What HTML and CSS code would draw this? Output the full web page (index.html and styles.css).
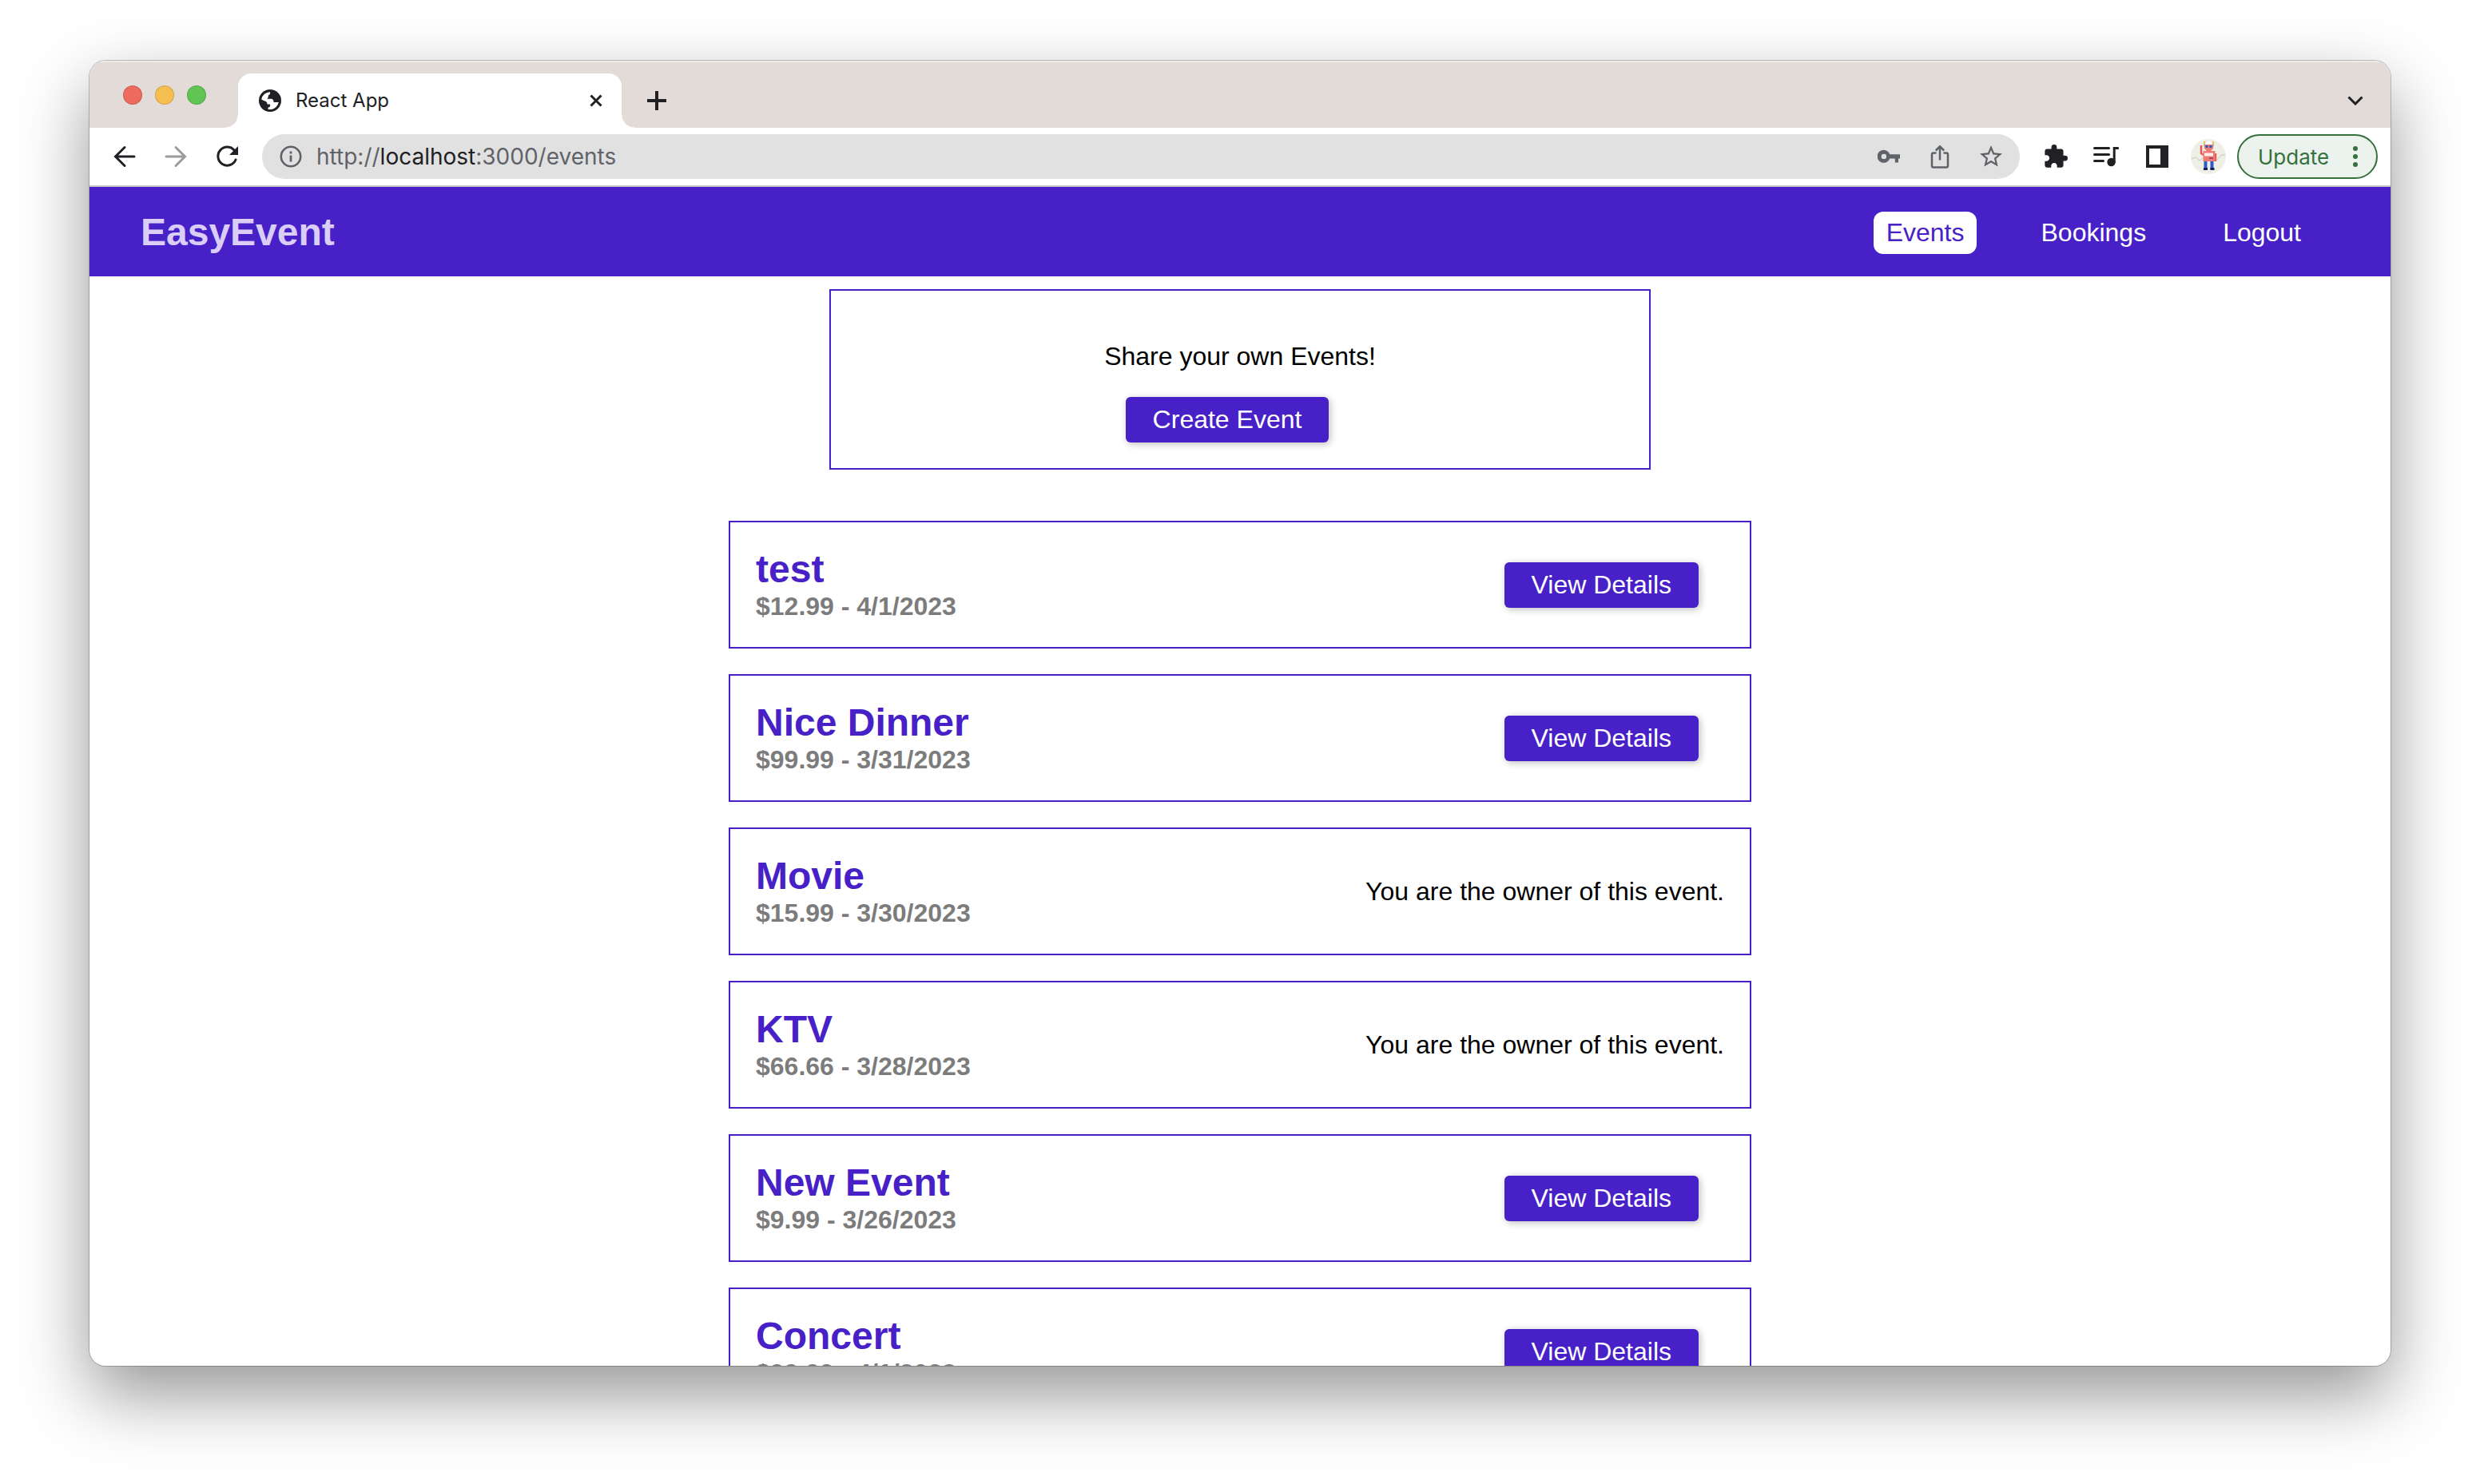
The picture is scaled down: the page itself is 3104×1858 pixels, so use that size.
FILE: index.html
```html
<!DOCTYPE html>
<html lang="en">
<head>
<meta charset="utf-8">
<title>React App</title>
<link rel="stylesheet" href="styles.css">
</head>
<body>
<div class="window">
  <div class="tabstrip">
    <div class="lights">
      <button class="light light-close" aria-label="Close window"></button>
      <button class="light light-min" aria-label="Minimize window"></button>
      <button class="light light-max" aria-label="Zoom window"></button>
    </div>
    <div class="tab">
      <svg class="favicon" viewBox="0 0 28 28" aria-hidden="true"><circle cx="14" cy="14" r="14" fill="#202124"/><path fill="#fff" d="M3.200 12.500A11 11 0 0 1 14 3.200c.6 2.800-1 3.300-2.200 4.300.2 2-.3 3-1.600 4.300h5.300c2 0 3 1.700 3 4.200h6.200A11 11 0 0 1 11.500 24.700v-2.200c2.500 0 3.500-2.500 2-4h-3c0-3-1.500-4-4-4.300z"/></svg>
      <span class="tab-title">React App</span>
      <button class="icon-btn" aria-label="Close tab"><svg width="16" height="16" viewBox="0 0 16 16"><path d="M1.500 1.500l13 13M14.500 1.500l-13 13" stroke="#202124" stroke-width="3" fill="none"/></svg></button>
    </div>
    <button class="icon-btn new-tab" aria-label="New tab"><svg width="24" height="24" viewBox="0 0 24 24"><path d="M12 0v24M0 12h24" stroke="#202124" stroke-width="4"/></svg></button>
    <button class="icon-btn tab-search" aria-label="Search tabs"><svg width="20" height="12" viewBox="0 0 20 12"><path d="M1.500 1.500L10 10l8.500-8.500" stroke="#202124" stroke-width="3" fill="none"/></svg></button>
  </div>

  <div class="toolbar">
    <button class="icon-btn nav-btn" aria-label="Back"><svg width="28" height="28" viewBox="0 0 28 28"><path d="M26 14H3M14 2.500L2.500 14 14 25.500" stroke="#202124" stroke-width="3" stroke-linecap="round" fill="none"/></svg></button>
    <button class="icon-btn nav-btn" aria-label="Forward"><svg width="28" height="28" viewBox="0 0 28 28"><path d="M2 14h23M14 2.500L25.500 14 14 25.500" stroke="#9c9c9c" stroke-width="3" stroke-linecap="round" fill="none"/></svg></button>
    <button class="icon-btn nav-btn" aria-label="Reload"><svg width="28" height="28" viewBox="0 0 28 28"><path d="M25 18A11.500 11.500 0 1 1 23 6" stroke="#202124" stroke-width="3" stroke-linecap="round" fill="none"/><path d="M28 1v11H17z" fill="#202124"/></svg></button>
    <div class="omnibox">
      <svg width="28" height="28" viewBox="0 0 28 28" aria-hidden="true"><circle cx="14" cy="14" r="12.200" stroke="#5f6368" stroke-width="2.600" fill="none"/><path d="M14 12.500v8M14 7.500v3" stroke="#5f6368" stroke-width="2.800"/></svg>
      <div class="url" role="textbox" aria-label="Address and search bar">http://<span class="host">localhost</span>:3000/events</div>
      <button class="icon-btn" aria-label="Passwords"><svg width="28" height="28" viewBox="0 0 28 28"><path fill="#5f6368" fill-rule="evenodd" d="M15.200 11.200H28v5.200h-2v5h-4.200v-5h-6.600a8 8 0 1 1 0-5.200zM7.900 10.700a3.200 3.200 0 1 0 0 6.400 3.200 3.200 0 0 0 0-6.400z"/></svg></button>
      <button class="icon-btn" aria-label="Share"><svg width="28" height="30" viewBox="0 0 28 30"><path d="M9.500 10.500H6a2 2 0 0 0-2 2v14a2 2 0 0 0 2 2h16a2 2 0 0 0 2-2v-14a2 2 0 0 0-2-2h-3.500M14 19.500V3M8.800 7.500L14 2.300l5.200 5.200" stroke="#5f6368" stroke-width="2.500" fill="none"/></svg></button>
      <button class="icon-btn" aria-label="Bookmark"><svg width="28" height="28" viewBox="2 2 20 20"><path fill="#5f6368" d="M22 9.240l-7.190-.62L12 2 9.190 8.630 2 9.240l5.460 4.730L5.820 21 12 17.270 18.180 21l-1.630-7.030L22 9.240zM12 15.400l-3.760 2.270 1-4.280-3.320-2.880 4.380-.38L12 6.100l1.710 4.040 4.380.38-3.320 2.880 1 4.280L12 15.400z"/></svg></button>
    </div>
    <div class="actions">
      <button class="icon-btn" aria-label="Extensions"><svg width="30" height="30" viewBox="1 1 22 22"><path fill="#202124" d="M20.500 11H19V7c0-1.100-.9-2-2-2h-4V3.500a2.500 2.500 0 0 0-5 0V5H4c-1.100 0-1.990.9-1.990 2v3.800H3.500c1.490 0 2.700 1.210 2.700 2.700s-1.210 2.700-2.700 2.700H2V20c0 1.100.9 2 2 2h3.800v-1.500c0-1.490 1.210-2.700 2.700-2.700s2.700 1.210 2.700 2.700V22H17c1.100 0 2-.9 2-2v-4h1.500a2.500 2.500 0 0 0 0-5z"/></svg></button>
      <button class="icon-btn" aria-label="Media controls"><svg width="34" height="26" viewBox="0 0 34 26"><path d="M1.500 2.500h18M1.500 10.500h18M1.500 18.500h11" stroke="#202124" stroke-width="3" stroke-linecap="round"/><circle cx="22.500" cy="20" r="5.200" fill="#202124"/><path d="M26.200 20V2.500h4.500" stroke="#202124" stroke-width="3" fill="none" stroke-linecap="round"/></svg></button>
      <button class="icon-btn" aria-label="Side panel"><svg width="28" height="28" viewBox="0 0 28 28"><path fill="#202124" fill-rule="evenodd" d="M0 0h28v28H0zM4 4v20h14V4z"/></svg></button>
      <button class="icon-btn profile" aria-label="Profile"><svg width="44" height="44" viewBox="0 0 44 44">
        <circle cx="22" cy="22" r="22" fill="#f0efe6"/>
        <path d="M1 25l5-2 5 4 4-3M33 26l5-6 5 0" stroke="#c4c6c4" fill="none"/>
        <path d="M17 3.500v6M28 3.500v6" stroke="#8ccfcb" stroke-width="2"/><path d="M17 3v3M28 3v3" stroke="#f0c24b" stroke-width="2"/>
        <path d="M18 7q4.500-9 9 0z" fill="#fff"/>
        <path d="M17 7h11v5l-3 3h-5l-3-3z" fill="#ee7a74"/><circle cx="20" cy="9.500" r="1.700" fill="#3159b8"/><circle cx="25" cy="9.500" r="1.700" fill="#3159b8"/>
        <path d="M13 8v10l3 2M31 18v10" stroke="#e35b55" stroke-width="2.500" fill="none"/>
        <path d="M15.500 15h15v13h-15z" fill="#ee7a74"/><path d="M17 17.500h11v4H17z" fill="#fdeee9"/><path d="M23 24h5" stroke="#a94464" stroke-width="2"/>
        <path d="M18.500 28v10M26.500 28v10" stroke="#2a5cc4" stroke-width="4"/><path d="M16 37.500h5M24.500 37.500h5" stroke="#14235c" stroke-width="3"/>
      </svg></button>
    </div>
    <button class="update">Update<svg width="8" height="28" viewBox="0 0 8 28" aria-hidden="true"><circle cx="4" cy="4" r="3"/><circle cx="4" cy="14" r="3"/><circle cx="4" cy="24" r="3"/></svg></button>
  </div>

  <div class="page">
    <header class="site-header">
      <h1 class="logo">EasyEvent</h1>
      <nav class="site-nav">
        <a class="nav-link active" href="#events">Events</a>
        <a class="nav-link" href="#bookings">Bookings</a>
        <button class="nav-link">Logout</button>
      </nav>
    </header>
    <main class="content">
      <section class="share">
        <p class="share-text">Share your own Events!</p>
        <button class="btn">Create Event</button>
      </section>
      <ul class="events">
        <li class="event"><div><h2 class="event-name">test</h2><h3 class="event-meta">$12.99 - 4/1/2023</h3></div><button class="btn">View Details</button></li>
        <li class="event"><div><h2 class="event-name">Nice Dinner</h2><h3 class="event-meta">$99.99 - 3/31/2023</h3></div><button class="btn">View Details</button></li>
        <li class="event"><div><h2 class="event-name">Movie</h2><h3 class="event-meta">$15.99 - 3/30/2023</h3></div><p class="owner">You are the owner of this event.</p></li>
        <li class="event"><div><h2 class="event-name">KTV</h2><h3 class="event-meta">$66.66 - 3/28/2023</h3></div><p class="owner">You are the owner of this event.</p></li>
        <li class="event"><div><h2 class="event-name">New Event</h2><h3 class="event-meta">$9.99 - 3/26/2023</h3></div><button class="btn">View Details</button></li>
        <li class="event"><div><h2 class="event-name">Concert</h2><h3 class="event-meta">$99.99 - 4/1/2023</h3></div><button class="btn">View Details</button></li>
      </ul>
    </main>
  </div>
</div>
</body>
</html>
```
FILE: styles.css
```css
:root {
  --brand: #4721c7;
}

* {
  box-sizing: border-box;
}

body {
  display: flex;
  height: 100vh;
  margin: 0;
  padding: 76px 112px 148px;
  background: #fff;
  font-family: "Liberation Sans", Arial, sans-serif;
  font-size: 32px;
}

h1, h2, h3, p, ul {
  margin: 0;
  padding: 0;
}

button {
  margin: 0;
  padding: 0;
  border: 0;
  background: none;
  font: inherit;
}

svg {
  display: block;
  flex: none;
}

.window {
  display: flex;
  flex: 1;
  flex-direction: column;
  min-width: 0;
  overflow: hidden;
  border-radius: 20px;
  background: #fff;
  box-shadow: 0 0 0 1px rgba(0, 0, 0, .22), 0 36px 88px rgba(0, 0, 0, .42);
}

/* Tab strip */
.tabstrip {
  display: flex;
  flex: none;
  align-items: flex-end;
  height: 84px;
  padding: 0 34px 0 42px;
  background: #e3dbd8;
  box-shadow: inset 0 2px 0 #efeae8;
}

.lights {
  display: flex;
  gap: 16px;
  width: 144px;
  height: 53px;
}

.light {
  width: 24px;
  height: 24px;
  border: 1px solid rgba(0, 0, 0, .14);
  border-radius: 50%;
}

.light-close { background: #ed6a5e; }
.light-min { background: #f5bf4f; }
.light-max { background: #61c554; }

.tab {
  position: relative;
  display: flex;
  align-items: center;
  width: 480px;
  height: 68px;
  padding: 0 24px 0 26px;
  border-radius: 16px 16px 0 0;
  background: #fff;
}

.tab::before,
.tab::after {
  content: "";
  position: absolute;
  bottom: 0;
  width: 16px;
  height: 16px;
}

.tab::before {
  right: 100%;
  background: radial-gradient(circle at 0 0, transparent 15px, #fff 16px);
}

.tab::after {
  left: 100%;
  background: radial-gradient(circle at 100% 0, transparent 15px, #fff 16px);
}

.favicon {
  width: 28px;
  height: 28px;
  margin-right: 18px;
}

.tab-title {
  flex: 1;
  color: #202124;
  font: 24px/28px Inter, sans-serif;
}

.icon-btn {
  display: flex;
  flex: none;
  align-items: center;
  justify-content: center;
}

.new-tab {
  width: 88px;
  height: 68px;
}

.tab-search {
  height: 68px;
  margin-left: auto;
}

/* Toolbar */
.toolbar {
  display: flex;
  flex: none;
  align-items: center;
  height: 74px;
  padding: 0 16px 0 12px;
  border-bottom: 2px solid #c8c8c8;
}

.nav-btn {
  width: 64px;
  height: 56px;
}

.omnibox {
  display: flex;
  flex: 1;
  align-items: center;
  gap: 36px;
  height: 56px;
  margin-left: 12px;
  padding: 0 22px;
  border-radius: 28px;
  background: #e1e1e1;
}

.url {
  flex: 1;
  margin-left: -18px;
  color: #5f6368;
  font: 28px Inter, sans-serif;
}

.host {
  color: #202124;
}

.actions {
  display: flex;
  align-items: center;
  gap: 32px;
  padding: 0 14px 0 30px;
}

.profile {
  margin-left: -4px;
}

.update {
  display: flex;
  align-items: center;
  justify-content: space-between;
  width: 176px;
  height: 56px;
  padding: 0 22px 0 24px;
  border: 2px solid #34713d;
  border-radius: 28px;
  background: #ecf2ee;
  color: #34713d;
  fill: #34713d;
  font: 26px Inter, sans-serif;
}

/* Page */
.page {
  flex: 1;
  min-height: 0;
  overflow: hidden;
}

.site-header {
  display: flex;
  align-items: center;
  justify-content: space-between;
  height: 112px;
  padding: 2px 96px 0 64px;
  background: var(--brand);
}

.logo {
  color: #dacdf8;
  font-size: 48px;
  line-height: 56px;
}

.site-nav {
  display: flex;
  align-items: center;
  gap: 64px;
}

.nav-link {
  padding: 8px 16px;
  border-radius: 12px;
  color: #fff;
  line-height: 37px;
  text-decoration: none;
}

.nav-link.active {
  background: #fff;
  color: var(--brand);
}

.content {
  padding: 16px 32px;
}

.share {
  display: flex;
  flex-direction: column;
  align-items: center;
  gap: 32px;
  max-width: 1028px;
  margin: 0 auto 64px;
  padding: 64px 32px 32px;
  border: 2px solid var(--brand);
}

.share-text {
  line-height: 37px;
}

.btn {
  margin-right: 32px;
  padding: 10px 34px;
  border-radius: 6px;
  background: var(--brand);
  box-shadow: 2px 2px 10px rgba(0, 0, 0, .26);
  color: #fff;
  line-height: 37px;
}

.events {
  display: grid;
  gap: 32px;
  max-width: 1280px;
  margin: 0 auto;
  list-style: none;
}

.event {
  display: flex;
  align-items: center;
  justify-content: space-between;
  height: 160px;
  padding: 32px;
  border: 2px solid var(--brand);
}

.event-name {
  color: var(--brand);
  font-size: 48px;
  line-height: 54px;
}

.event-meta {
  color: #7c7c7c;
  font-size: 32px;
  line-height: 38px;
}
```
